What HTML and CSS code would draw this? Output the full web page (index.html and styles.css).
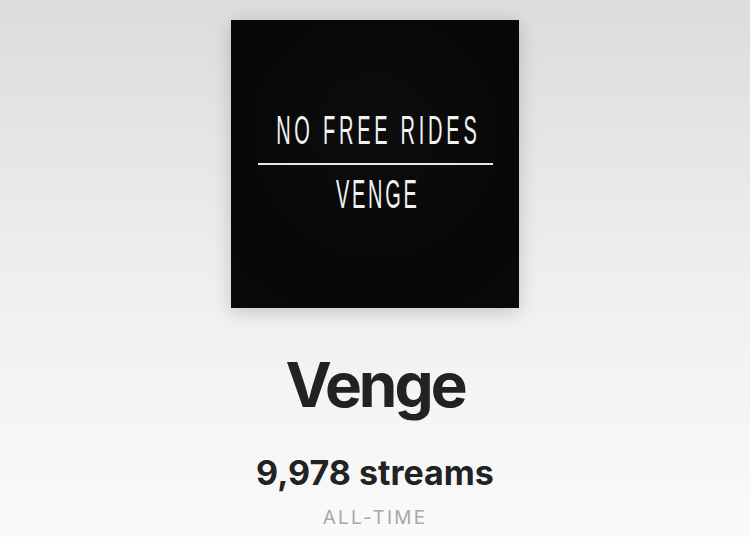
FILE: index.html
```html
<!DOCTYPE html>
<html lang="en">
<head>
    <meta charset="UTF-8">
    <meta name="viewport" content="width=device-width, initial-scale=1.0">
    <title>Venge</title>
    <link rel="stylesheet" href="styles.css">
</head>
<body>

<div class="page">
    <div class="cover">
        <div class="cover-title">NO FREE RIDES</div>
        <div class="cover-line"></div>
        <div class="cover-artist">VENGE</div>
    </div>

    <h1 class="artist">Venge</h1>
    <div class="streams">9,978 streams</div>
    <div class="period">ALL-TIME</div>
</div>

</body>
</html>
```

FILE: styles.css
```css
html, body {
    margin: 0;
    padding: 0;
    height: 100%;
}
body {
    font-family: 'Inter', 'Liberation Sans', sans-serif;
    background: linear-gradient(to bottom, #dcdcdc 0%, #f0f0f0 55%, #fafafa 100%);
    color: #222;
    overflow: hidden;
}
.page {
    display: flex;
    flex-direction: column;
    align-items: center;
    padding-top: 20px;
}
.cover {
    width: 288px;
    height: 288px;
    background: radial-gradient(circle at 50% 40%, #0d0d0d 0%, #070707 70%, #0a0a0a 100%);
    box-shadow: 0 4px 18px rgba(0, 0, 0, 0.18);
    display: flex;
    flex-direction: column;
    align-items: center;
    padding-top: 90px;
    box-sizing: border-box;
    color: #f2f2f2;
}
.cover-title, .cover-artist {
    font-family: 'Liberation Sans', sans-serif;
    font-size: 40px;
    line-height: 40px;
    transform: scaleX(0.5);
    white-space: nowrap;
}
.cover-title {
    letter-spacing: 7.5px;
    margin-right: -7.5px;
}
.cover-artist {
    letter-spacing: 5.5px;
    margin-right: -5.5px;
}
.cover-line {
    width: 235px;
    height: 2px;
    background: #e8e8e8;
    margin: 13px 0 9px;
}
.artist {
    font-size: 62px;
    font-weight: 700;
    letter-spacing: -3px;
    margin: 37px 0 0;
    line-height: 80px;
}
.streams {
    font-size: 34px;
    font-weight: 700;
    margin-top: 28px;
    line-height: 40px;
}
.period {
    font-size: 19px;
    color: #a8a8a8;
    letter-spacing: 2.2px;
    margin-top: 13px;
}
```
